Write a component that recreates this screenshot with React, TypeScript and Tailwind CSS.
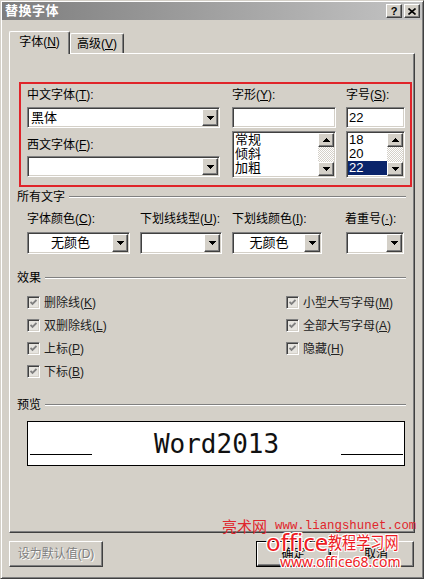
import React from "react";

const UI =
  "font-['Liberation_Sans','Noto_Sans_CJK_SC',sans-serif] text-[12px] leading-[14px] text-black";

const RAISED =
  "border border-t-white border-l-white border-r-[#404040] border-b-[#404040] shadow-[inset_-1px_-1px_0_#808080] bg-[#d4d0c8]";

const SUNKEN =
  "border border-t-[#808080] border-l-[#808080] border-r-white border-b-white shadow-[inset_1px_1px_0_#404040,inset_-1px_-1px_0_#d4d0c8] p-[1px]";

const HALO =
  "[text-shadow:1px_0_0_#fff,-1px_0_0_#fff,0_1px_0_#fff,0_-1px_0_#fff,1px_1px_0_#fff,-1px_-1px_0_#fff,1px_-1px_0_#fff,-1px_1px_0_#fff]";

function Arrow({ up = false }: { up?: boolean }) {
  const rows = up
    ? [
        [3, 0, 1],
        [2, 1, 3],
        [1, 2, 5],
        [0, 3, 7],
      ]
    : [
        [0, 0, 7],
        [1, 1, 5],
        [2, 2, 3],
        [3, 3, 1],
      ];
  return (
    <svg width="7" height="4" viewBox="0 0 7 4" shapeRendering="crispEdges">
      {rows.map(([x, y, w]) => (
        <rect key={y} x={x} y={y} width={w} height={1} fill="#000" />
      ))}
    </svg>
  );
}

function Combo({
  className,
  text,
  center = false,
}: {
  className: string;
  text?: React.ReactNode;
  center?: boolean;
}) {
  return (
    <div className={`${SUNKEN} bg-white flex ${className}`}>
      <div
        className={`flex-1 flex items-center px-[2px] text-[13px] ${
          center ? "justify-center" : ""
        }`}
      >
        {text}
      </div>
      <div className={`${RAISED} w-[16px] flex items-center justify-center`}>
        <Arrow />
      </div>
    </div>
  );
}

function TextBox({ className, text }: { className: string; text?: string }) {
  return (
    <div className={`${SUNKEN} bg-white flex items-center px-[2px] text-[13px] ${className}`}>
      {text}
    </div>
  );
}

function ListBox({
  items,
  selected,
  className,
}: {
  items: string[];
  selected?: string;
  className: string;
}) {
  return (
    <div className={`${SUNKEN} bg-white flex ${className}`}>
      <div className="flex-1 flex flex-col">
        {items.map((it) => (
          <div
            key={it}
            className={`h-[14px] pl-[1px] flex items-center text-[13px] ${
              it === selected ? "bg-[#0a246a] text-white" : ""
            }`}
          >
            {it}
          </div>
        ))}
      </div>
      <div className="w-[16px] flex flex-col">
        <div className={`${RAISED} h-[14px] flex items-center justify-center`}>
          <Arrow up />
        </div>
        <div className="flex-1 bg-[image:repeating-conic-gradient(#d4d0c8_0_25%,#ffffff_0_50%)] bg-[length:2px_2px]" />
        <div className={`${RAISED} h-[14px] flex items-center justify-center`}>
          <Arrow />
        </div>
      </div>
    </div>
  );
}

function Label({ text, acc, tail = ":" }: { text: string; acc: string; tail?: string }) {
  return (
    <div className="h-[14px] whitespace-nowrap">
      {text}(<span className="underline underline-offset-[1px]">{acc}</span>){tail}
    </div>
  );
}

function GroupHeader({ text, className }: { text: string; className: string }) {
  return (
    <div className={`flex items-center h-[14px] ml-[7px] w-[389px] ${className}`}>
      <span className="whitespace-nowrap">{text}</span>
      <div className="flex-1 ml-[4px] h-[2px] border-t border-t-[#808080] border-b border-b-white" />
    </div>
  );
}

function Check({ text, acc }: { text: string; acc: string }) {
  return (
    <div className="flex items-center h-[23px]">
      <div className="w-[13px] h-[13px] border border-t-[#808080] border-l-[#808080] border-r-white border-b-white shadow-[inset_1px_1px_0_#404040,inset_-1px_-1px_0_#d4d0c8] bg-[#e6e4df] flex items-center justify-center">
        <svg width="7" height="7" viewBox="0 0 7 7">
          <polyline
            points="0.5,3 2.5,5 6.5,1"
            fill="none"
            stroke="#808080"
            strokeWidth="1.8"
          />
        </svg>
      </div>
      <span className="ml-[4px] text-[#222]">
        {text}(<span className="underline underline-offset-[1px]">{acc}</span>)
      </span>
    </div>
  );
}

function TitleBtn({ children }: { children: React.ReactNode }) {
  return (
    <div
      className={`${RAISED} w-[16px] h-[14px] flex items-center justify-center font-bold text-[11px] leading-none`}
    >
      {children}
    </div>
  );
}

export default function App() {
  return (
    <div
      className={`relative w-[424px] h-[579px] bg-[#d4d0c8] ${UI} border border-t-[#d4d0c8] border-l-[#d4d0c8] border-r-[#404040] border-b-[#404040] shadow-[inset_1px_1px_0_#ffffff,inset_-1px_-1px_0_#808080] p-[1px] flex flex-col overflow-hidden`}
    >
      {/* caption */}
      <div className="h-[18px] flex items-center bg-linear-to-r from-[#7e7e7e] to-[#c4c4c4] pl-[3px] pr-[2px]">
        <span className="font-bold text-white text-[13px] tracking-[0.5px]">替换字体</span>
        <div className="ml-auto flex gap-[2px]">
          <TitleBtn>?</TitleBtn>
          <TitleBtn>
            <svg width="8" height="7" viewBox="0 0 8 7">
              <path d="M0.5 0.5 L7.5 6.5 M7.5 0.5 L0.5 6.5" stroke="#000" strokeWidth="1.6" />
            </svg>
          </TitleBtn>
        </div>
      </div>

      {/* tabs */}
      <div className="mt-[11px] ml-[7px] h-[23px] flex items-end">
        <div className="relative z-10 w-[61px] h-[23px] bg-[#d4d0c8] border-t border-l border-t-white border-l-white border-r border-r-[#404040] shadow-[inset_-1px_0_0_#808080] rounded-tl-[2px] rounded-tr-[2px] flex items-center justify-center pb-[2px]">
          字体(<span className="underline underline-offset-[1px]">N</span>)
        </div>
        <div className="mb-[1px] w-[54px] h-[20px] bg-[#d4d0c8] border-t border-l border-t-white border-l-white border-r border-r-[#404040] shadow-[inset_-1px_0_0_#808080] rounded-tl-[2px] rounded-tr-[2px] flex items-center justify-center">
          高级(<span className="underline underline-offset-[1px]">V</span>)
        </div>
      </div>

      {/* tab page */}
      <div className="-mt-[1px] ml-[7px] w-[406px] h-[480px] border border-t-white border-l-white border-r-[#404040] border-b-[#404040] shadow-[inset_-1px_-1px_0_#808080] flex flex-col">
        <div className="mt-[28px] ml-[9px] w-[393px] h-[105px] border-2 border-[#e0242a] flex pl-[6px] pt-[4px]">
          <div className="w-[193px] flex flex-col">
            <Label text="中文字体" acc="T" />
            <Combo className="mt-[5px] h-[21px]" text={<span className="text-[13px]">黑体</span>} />
            <div className="mt-[10px]">
              <Label text="西文字体" acc="F" />
            </div>
            <Combo className="mt-[4px] h-[21px]" />
          </div>
          <div className="ml-[12px] w-[104px] flex flex-col">
            <Label text="字形" acc="Y" />
            <TextBox className="mt-[5px] h-[21px]" />
            <ListBox className="mt-[3px] h-[47px]" items={["常规", "倾斜", "加粗"]} />
          </div>
          <div className="ml-[10px] w-[59px] flex flex-col">
            <Label text="字号" acc="S" />
            <TextBox className="mt-[5px] h-[21px]" text="22" />
            <ListBox className="mt-[3px] h-[47px]" items={["18", "20", "22"]} selected="22" />
          </div>
        </div>

        <GroupHeader text="所有文字" className="mt-[3px]" />
        <div className="mt-[8px] ml-[17px] flex">
          <div className="w-[103px] flex flex-col">
            <Label text="字体颜色" acc="C" />
            <Combo className="mt-[6px] h-[22px]" text="无颜色" center />
          </div>
          <div className="ml-[10px] w-[82px] flex flex-col">
            <Label text="下划线线型" acc="U" />
            <Combo className="mt-[6px] h-[22px]" />
          </div>
          <div className="ml-[10px] w-[90px] flex flex-col">
            <Label text="下划线颜色" acc="I" />
            <Combo className="mt-[6px] h-[22px]" text="无颜色" center />
          </div>
          <div className="ml-[24px] w-[58px] flex flex-col">
            <div className="h-[14px] -ml-[1px] whitespace-nowrap">
              着重号(<span className="underline underline-offset-[1px]">·</span>):
            </div>
            <Combo className="mt-[6px] h-[22px]" />
          </div>
        </div>

        <GroupHeader text="效果" className="mt-[17px]" />
        <div className="mt-[6px] ml-[17px] flex">
          <div className="w-[259px] flex flex-col">
            <Check text="删除线" acc="K" />
            <Check text="双删除线" acc="L" />
            <Check text="上标" acc="P" />
            <Check text="下标" acc="B" />
          </div>
          <div className="flex flex-col">
            <Check text="小型大写字母" acc="M" />
            <Check text="全部大写字母" acc="A" />
            <Check text="隐藏" acc="H" />
          </div>
        </div>

        <GroupHeader text="预览" className="mt-[15px]" />
        <div className="mt-[9px] ml-[17px] w-[378px] h-[45px] border border-black bg-white flex pl-[2px] pr-[1px]">
          <div className="w-[62px] h-[1px] bg-black mt-[32px]" />
          <div className="flex-1 text-center pt-[9px] font-['DejaVu_Sans_Mono',monospace] text-[26px] leading-[26px] text-[#111]">
            Word2013
          </div>
          <div className="w-[62px] h-[1px] bg-black mt-[32px]" />
        </div>
      </div>

      {/* dialog buttons */}
      <div className="mt-[8px] ml-[7px] mr-[8px] h-[26px] flex">
        <div className={`${RAISED} w-[94px] h-[26px] flex items-center justify-center text-[#808080] [text-shadow:1px_1px_0_#ffffff]`}>
          设为默认值(D)
        </div>
        <div className="ml-auto w-[75px] h-[26px] border border-black">
          <div className={`${RAISED} w-full h-full flex items-center justify-center`}>确定</div>
        </div>
        <div className={`${RAISED} ml-[7px] w-[76px] h-[26px] flex items-center justify-center`}>
          取消
        </div>
      </div>

      {/* site marks */}
      <div className="absolute left-[221px] top-[516px] flex items-end text-[#e0262c] whitespace-nowrap">
        <span className="text-[15px] leading-[17px] font-['Noto_Sans_CJK_SC',sans-serif]">亮术网</span>
        <span className="ml-[8px] text-[12.4px] leading-[15px] font-['Liberation_Mono',monospace]">
          www.liangshunet.com
        </span>
      </div>
      <div
        className={`absolute left-[265px] top-[528px] flex items-center text-[#ee1c24] whitespace-nowrap ${HALO}`}
      >
        <span className="text-[24px] leading-[26px] font-['Noto_Sans',sans-serif]">office</span>
        <span className="inline-block origin-left scale-x-[0.83] text-[17px] leading-[20px] font-['Noto_Sans_CJK_SC',sans-serif]">
          教程学习网
        </span>
      </div>
      <div
        className={`absolute left-[279px] top-[553px] text-[#ee1c24] whitespace-nowrap text-[14px] leading-[16px] font-['Noto_Sans',sans-serif] ${HALO}`}
      >
        www.office68.com
      </div>
    </div>
  );
}
